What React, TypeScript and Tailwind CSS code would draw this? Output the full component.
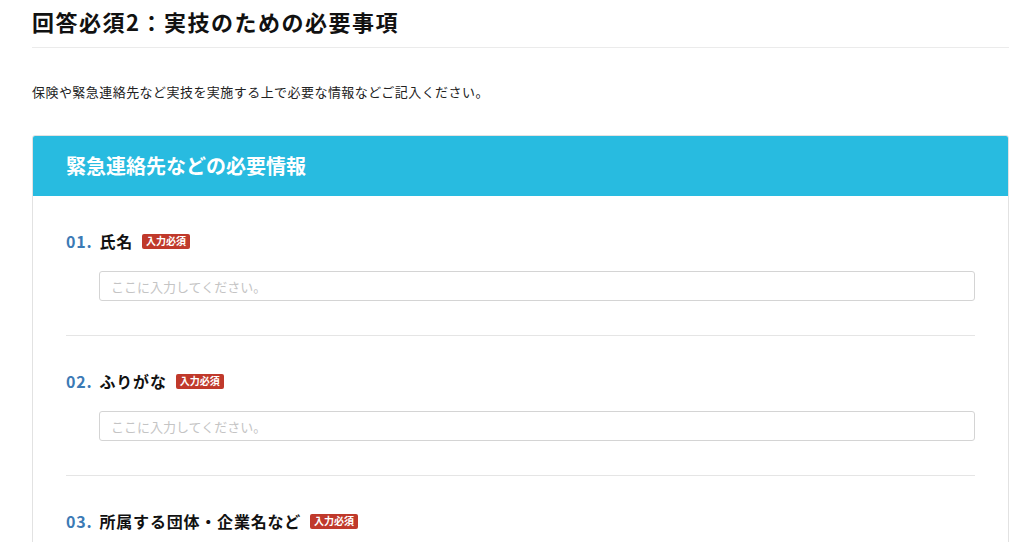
import React from "react";

const font = { fontFamily: '"Noto Sans CJK JP", "Noto Sans", sans-serif' };

function Item({ no, label, last }: { no: string; label: string; last?: boolean }) {
  return (
    <div className={`pt-[34px] pb-[34px] ${last ? "" : "border-b border-[#e5e5e5]"}`}>
      <div className="flex items-center h-[22px]">
        <span className="text-[16px] font-bold text-[#3b7ab5] leading-[22px] tracking-[0.8px]">{no}</span>
        <span className="ml-[7px] text-[16px] font-bold text-[#111] leading-[22px] tracking-[0.8px]">{label}</span>
        <span className="ml-[9px] inline-flex items-center justify-center h-[15px] px-[4px] rounded-[2px] bg-[#c0392b] text-white text-[10px] font-bold leading-none">
          入力必須
        </span>
      </div>
      <div className="mt-[19px] ml-[33px]">
        <input
          type="text"
          placeholder="ここに入力してください。"
          className="w-full h-[30px] border border-[#d4d4d4] rounded-[3px] px-[11px] text-[13px] text-[#333] placeholder:text-[#c4c4c4] outline-none bg-white"
          style={font}
        />
      </div>
    </div>
  );
}

export default function App() {
  return (
    <div className="bg-white w-[1024px] h-[542px] overflow-hidden pl-[32px] pr-[15px]" style={font}>
      <h1 className="mt-[7px] text-[22px] font-bold leading-[28px] tracking-[1.5px] text-[#111] pb-[12px] border-b border-[#ebebeb]">
        回答必須2：実技のための必要事項
      </h1>
      <p className="mt-[35px] text-[13px] leading-[18px] tracking-[0.45px] text-[#222]">
        保険や緊急連絡先など実技を実施する上で必要な情報などご記入ください。
      </p>
      <div className="mt-[34px] border border-[#e2e2e2] rounded-[3px] overflow-hidden">
        <div className="h-[60px] bg-[#28bbe0] flex items-center px-[33px]">
          <span className="text-white text-[20px] font-bold leading-[26px]">緊急連絡先などの必要情報</span>
        </div>
        <div className="px-[33px]">
          <Item no="01." label="氏名" />
          <Item no="02." label="ふりがな" />
          <Item no="03." label="所属する団体・企業名など" last />
        </div>
      </div>
    </div>
  );
}
